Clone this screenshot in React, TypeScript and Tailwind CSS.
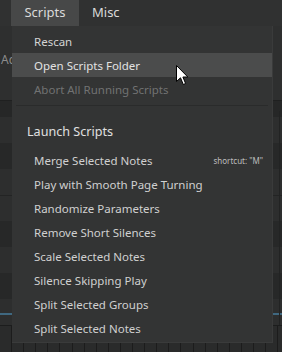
import React from "react";

const items = [
  "Merge Selected Notes",
  "Play with Smooth Page Turning",
  "Randomize Parameters",
  "Remove Short Silences",
  "Scale Selected Notes",
  "Silence Skipping Play",
  "Split Selected Groups",
  "Split Selected Notes",
];

const bands: { h: string; c: string }[] = [
  { h: "h-[16px]", c: "bg-[#262727]" },
  { h: "h-[26px]", c: "bg-[#2d2e2e]" },
  { h: "h-[26px]", c: "bg-[#272828]" },
  { h: "h-[26px]", c: "bg-[#2d2e2e]" },
  { h: "h-[26px]", c: "bg-[#2d2e2e] border-t border-[#232424]" },
  { h: "h-[26px]", c: "bg-[#272828]" },
  { h: "h-[26px]", c: "bg-[#2d2e2e]" },
  { h: "h-[26px]", c: "bg-[#272828]" },
];

export default function App() {
  return (
    <div
      className="relative w-[282px] h-[352px] overflow-hidden bg-[#2c2d2d] text-[#d2d2d2]"
      style={{ fontFamily: '"Noto Sans", "Open Sans", sans-serif' }}
    >
      {/* Top menu bar */}
      <div className="flex h-[26px] bg-[#303131] text-[13px] text-[#dadada]">
        <div className="w-[11px]" />
        <div className="flex w-[68px] items-center justify-center bg-[#474848]">Scripts</div>
        <div className="flex items-center pl-[13px]">Misc</div>
      </div>

      {/* Toolbar area */}
      <div className="flex h-[74px] items-center bg-[#2e2f2f] pl-[1px] text-[12px] text-[#8c8c8c]">
        <span className="mb-[6px]">Ac</span>
      </div>
      <div className="h-px bg-[#1f2020]" />

      {/* Piano roll bands */}
      <div className="relative flex flex-col">
        {bands.map((b, i) => (
          <div key={i} className={`${b.h} ${b.c}`} />
        ))}
        <div className="h-[14px] bg-[#2d2e2e]" />
        <div className="h-[2px] bg-[#3f6880]" />
        <div className="h-[10px] bg-[#2d2e2e]" />
        <div className="absolute right-[2px] top-[10px] bottom-0 w-px bg-[#222323]" />
      </div>
      <div className="h-px bg-[#1c1d1d]" />

      {/* Bottom grid */}
      <div className="flex h-[30px] bg-[#2a2b2b]">
        {Array.from({ length: 24 }).map((_, i) => (
          <div key={i} className="w-[12.1px] shrink-0 border-r border-[#1c1c1c]" />
        ))}
      </div>

      {/* Dropdown menu */}
      <div className="absolute left-[12px] top-[26px] w-[261px] h-[317px] bg-[#333434] border-r border-b border-[#3a3b3b] pt-[3px] text-[11.5px]">
        <div className="flex h-6 items-center pl-[22px] pt-px text-[#d4d4d4]">Rescan</div>
        <div className="flex h-6 items-center bg-[#4b4c4c] pl-[22px] pt-px text-[#e2e2e2]">Open Scripts Folder</div>
        <div className="flex h-6 items-center pl-[22px] pt-px text-[#717272]">Abort All Running Scripts</div>
        <div className="mx-[4px] mt-[4px] h-px bg-[#2a2b2b]" />
        <div className="h-[42px] pt-[16px] pl-[15px] text-[12.6px] leading-[20px] text-[#e0e0e0]">Launch Scripts</div>
        {items.map((t, i) => (
          <div key={t} className="flex h-6 items-center justify-between pl-[22px] pr-[9px] pt-[2px] text-[#d0d0d0]">
            <span>{t}</span>
            {i === 0 && <span className="text-[8px] text-[#bdbdbd]">shortcut: "M"</span>}
          </div>
        ))}
      </div>

      {/* Mouse cursor */}
      <svg
        className="absolute left-[176px] top-[65px]"
        width="13"
        height="21"
        viewBox="0 0 13 21"
      >
        <path
          d="M0.5 0.5 L0.5 16.5 L4.5 12.8 L7.3 19.5 L9.6 18.5 L6.9 12 L11.8 12 Z"
          fill="#ffffff"
          stroke="#000000"
          strokeWidth="1"
          strokeLinejoin="miter"
        />
      </svg>
    </div>
  );
}
